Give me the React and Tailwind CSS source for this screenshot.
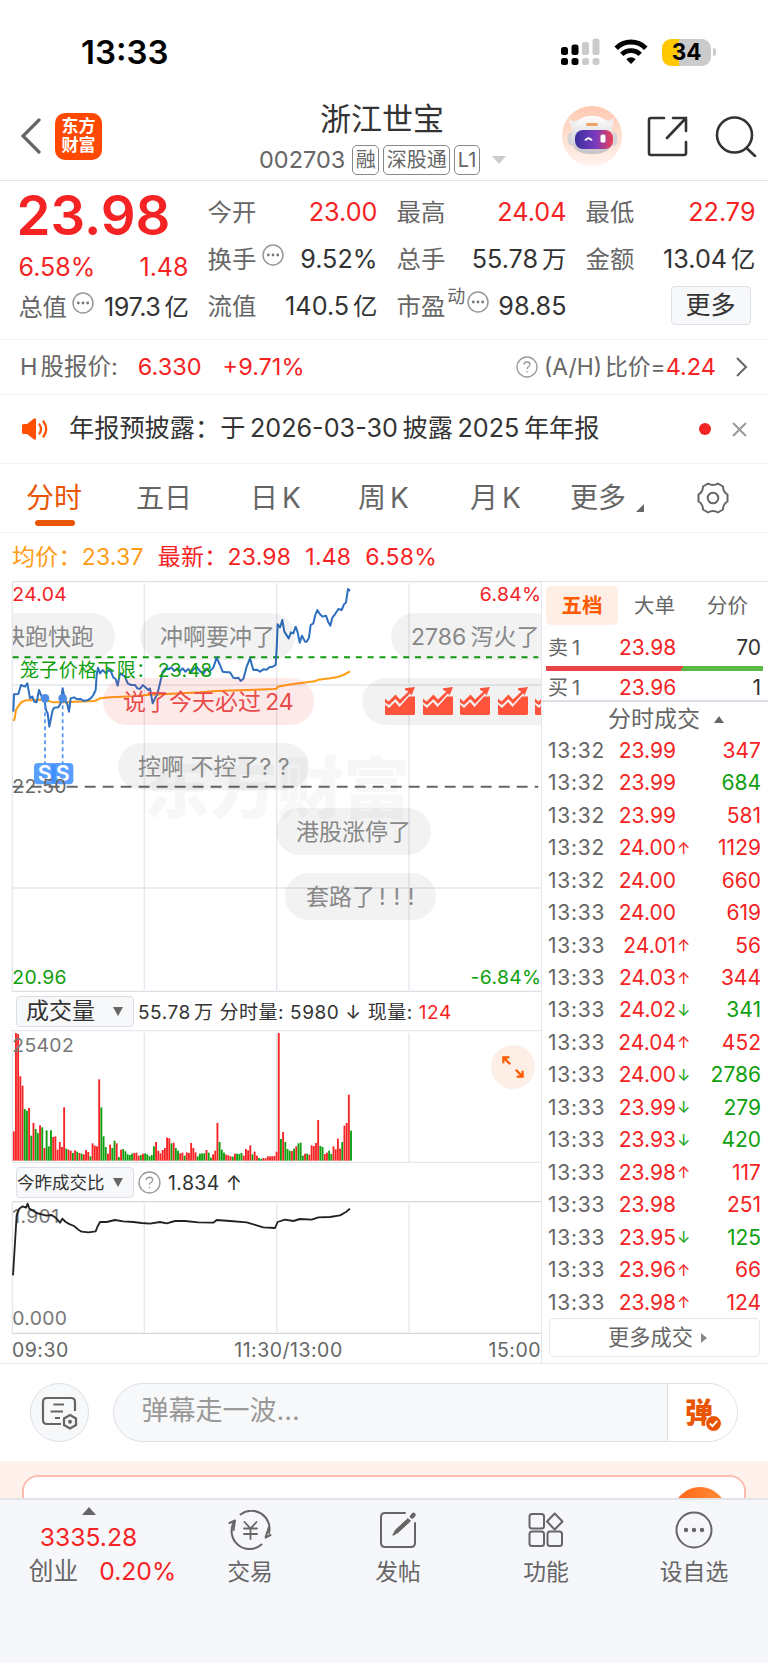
import { X } from 'lucide-react'

// Chart geometry is kept in @3x units, the svg viewBoxes scale it back down
const PRICE_LINE =
  '40,410 42,358 55,357 63,330 75,335 82,325 90,370 97,365 103,380 110,382 117,345 125,365 133,372 138,405 143,415 148,455 158,405 163,398 175,397 182,385 188,340 195,375 202,388 207,410 212,370 222,367 232,373 242,372 250,377 262,376 272,370 280,360 287,345 290,300 294,278 300,295 308,285 318,295 326,285 333,290 340,308 347,312 353,332 360,295 368,300 375,305 383,325 393,330 405,330 412,340 420,342 428,330 436,337 445,345 450,340 458,385 465,370 472,358 480,325 488,290 497,280 505,283 514,277 523,288 532,280 540,288 548,280 556,290 565,282 573,292 580,283 590,276 600,288 610,297 620,280 628,290 640,278 650,248 660,270 668,290 680,292 690,292 700,308 708,310 715,308 722,318 730,312 740,275 750,250 760,285 770,284 780,290 790,283 800,284 808,277 818,275 827,270 830,220 833,148 840,157 847,135 853,170 866,190 873,172 880,175 887,155 893,172 899,203 906,182 915,200 920,200 927,188 932,150 940,145 946,120 952,105 960,118 968,125 978,122 985,142 991,152 997,128 1005,118 1015,102 1025,105 1032,88 1038,82 1044,42 1050,48'

const AVG_LINE =
  '40,438 44,430 48,405 55,393 65,381 78,376 100,376 120,374 140,376 160,382 190,382 285,378 300,370 330,367 400,364 440,360 500,357 560,354 600,352 650,348 720,346 820,342 830,341 832,335 860,330 920,322 945,319 955,314 990,310 1010,307 1030,300 1050,289'

const RATIO_LINE =
  '39,885 46,770 50,705 58,685 68,678 78,682 83,670 88,685 97,690 110,698 125,702 140,706 155,704 168,713 180,727 187,715 197,725 210,732 222,737 235,748 245,754 265,756 287,753 292,740 300,725 320,725 345,719 370,723 400,725 425,728 450,730 480,725 500,729 525,722 555,722 595,726 640,727 650,719 690,722 740,726 770,735 790,741 825,743 833,725 855,718 880,722 900,716 935,718 955,711 990,710 1020,705 1038,695 1050,685'

// negative = falling minute
const VOLUMES = [
  88, 383, 380, 253, 225, -155, -150, 158, -75, 113, -95, -83, 106, -100, 38, -91, -43, -91, 71, 73,
  33, 56, 41, 160, -36, 33, 30, -23, 31, -27, 23, -21, 19, 32, 26, -13, 52, 45, 43, 244,
  -160, -73, -41, 21, 48, -38, -60, 52, -11, 33, -35, -28, -19, -17, -21, 23, 24, 15, -17, 21,
  -22, -19, -13, -17, -43, 56, 30, 22, 32, 38, 69, 67, -52, 54, -38, -30, 22, 24, -15, 25,
  23, 53, 38, 25, -13, -21, -22, -22, 32, -24, -9, 19, 30, 113, -56, -33, -24, 18, 16, 13,
  -12, 21, -21, -20, -23, 15, 35, 31, 46, -19, 27, 15, -8, -5, 8, 7, 13, 13, 13, 14,
  27, 383, -65, 86, -56, -35, -30, 29, -36, 43, -52, -54, -15, 21, -21, 18, 46, 44, 53, 122,
  -44, -41, 20, 24, -30, -20, 43, 34, 66, 36, -56, 105, 113, 198, -90,
]

const TRADES = [
  ['13:32', '23.99', '', '347', 'up'],
  ['13:32', '23.99', '', '684', 'down'],
  ['13:32', '23.99', '', '581', 'up'],
  ['13:32', '24.00', '↑', '1129', 'up'],
  ['13:32', '24.00', '', '660', 'up'],
  ['13:33', '24.00', '', '619', 'up'],
  ['13:33', '24.01', '↑', '56', 'up'],
  ['13:33', '24.03', '↑', '344', 'up'],
  ['13:33', '24.02', '↓', '341', 'down'],
  ['13:33', '24.04', '↑', '452', 'up'],
  ['13:33', '24.00', '↓', '2786', 'down'],
  ['13:33', '23.99', '↓', '279', 'down'],
  ['13:33', '23.93', '↓', '420', 'down'],
  ['13:33', '23.98', '↑', '117', 'up'],
  ['13:33', '23.98', '', '251', 'up'],
  ['13:33', '23.95', '↓', '125', 'down'],
  ['13:33', '23.96', '↑', '66', 'up'],
  ['13:33', '23.98', '↑', '124', 'up'],
]

function StatusBar() {
  return (
    <div className="flex h-[87px] items-center pt-[17px] pl-[81px] pr-[52px]">
      <span className="text-[33px] font-semibold leading-none text-black">13:33</span>
      <svg className="ml-auto" width="40" height="28" viewBox="0 0 40 28">
        <rect x="0" y="9" width="7" height="8" rx="2.5" />
        <rect x="10.5" y="6.5" width="7" height="10.5" rx="2.5" />
        <rect x="21" y="4" width="7" height="13" rx="2.5" fill="#cbcbcb" />
        <rect x="31.5" y="0.5" width="7" height="16.5" rx="2.5" fill="#cbcbcb" />
        <rect x="0" y="20" width="7" height="7" rx="2.5" />
        <rect x="10.5" y="20" width="7" height="7" rx="2.5" />
        <rect x="21" y="20" width="7" height="7" rx="2.5" fill="#cbcbcb" />
        <rect x="31.5" y="20" width="7" height="7" rx="2.5" fill="#cbcbcb" />
      </svg>
      <svg className="ml-[13px]" width="34" height="26" viewBox="0 0 34 26" fill="none" stroke="#000" strokeWidth="5">
        <path d="M2.2 9.2 A21 21 0 0 1 31.8 9.2" />
        <path d="M7.8 15.4 A13 13 0 0 1 26.2 15.4" strokeWidth="4.6" />
        <path d="M17 25 L12.3 20.3 A6.7 6.7 0 0 1 21.7 20.3 Z" fill="#000" stroke="none" />
      </svg>
      <div className="ml-[14px] flex items-center gap-0.5">
        <div className="flex h-[27px] w-[49px] items-center justify-center rounded-[9px] bg-[linear-gradient(90deg,#ffc800_35%,#cbcbcb_35%)] text-[22.5px] font-bold leading-none text-black">
          34
        </div>
        <div className="h-2 w-[3px] rounded-r-full bg-[#cbcbcb]" />
      </div>
    </div>
  )
}

function Robot() {
  return (
    <svg width="60" height="60" viewBox="0 0 60 60">
      <defs>
        <linearGradient id="halo" x1="0" y1="0" x2="0" y2="1">
          <stop offset="0" stopColor="#ffc9b0" />
          <stop offset="1" stopColor="#fff3ee" />
        </linearGradient>
        <linearGradient id="shell" x1="0" y1="0" x2="0" y2="1">
          <stop offset="0" stopColor="#ffffff" />
          <stop offset="1" stopColor="#c4c2c8" />
        </linearGradient>
        <linearGradient id="visor" x1="0" y1="0" x2="1" y2="0">
          <stop offset="0" stopColor="#3b2f9c" />
          <stop offset="0.55" stopColor="#7a3bc0" />
          <stop offset="1" stopColor="#ee3f52" />
        </linearGradient>
      </defs>
      <circle cx="30" cy="30" r="30" fill="url(#halo)" />
      <path d="M7 12 Q7 21 13 24 L20 13 Q10 18 7 12Z M51 11 Q53 20 47 24 L40 13 Q49 17 51 11Z" fill="#efedf0" />
      <ellipse cx="9.5" cy="33" rx="4" ry="7" fill="#d5d2d8" />
      <ellipse cx="51.5" cy="33" rx="4" ry="7" fill="#d5d2d8" />
      <path d="M30 10 C45 10 51 20 51 32 C51 44 43 48 30 48 C17 48 9 44 9 32 C9 20 15 10 30 10Z" fill="url(#shell)" />
      <rect x="24" y="17" width="12" height="3" rx="1.5" fill="#f2a468" />
      <rect x="13" y="24" width="38" height="19" rx="8" fill="url(#visor)" />
      <path d="M23 34.5 q3.5 -4.5 7 0" fill="none" stroke="#fff" strokeWidth="1.8" />
      <rect x="38.5" y="28.5" width="5" height="8" rx="1.5" fill="#fff" />
    </svg>
  )
}

function Tag({ children }) {
  return <span className="flex h-[30px] items-center rounded-[5px] border-[1.5px] border-[#888] px-[2.5px] text-[20px] leading-none">{children}</span>
}

function Header() {
  return (
    <header className="flex h-[94px] items-center border-b border-[#e4e6ea] pr-[11px] pt-[5px]">
      <div className="flex w-[259px] items-center">
        <svg className="ml-5 shrink-0" width="22" height="36" viewBox="0 0 22 36" fill="none" stroke="#666" strokeWidth="3.2" strokeLinecap="round">
          <path d="M19 2 L3 18 L19 34" />
        </svg>
        <div className="ml-[13px] flex h-[47px] w-[47px] flex-col items-center justify-center rounded-[10px] bg-[#ff4800] text-[17px] font-bold leading-[19px] text-white">
          <span>东方</span>
          <span>财富</span>
        </div>
      </div>
      <div className="flex flex-1 flex-col items-start pt-[4px]">
        <h1 className="ml-[61px] text-[31px] leading-[36px] text-[#333]">浙江世宝</h1>
        <div className="mt-[8px] flex items-center gap-[4px] text-[#666]">
          <span className="mr-[3px] text-[23.5px] leading-none">002703</span>
          <Tag>融</Tag>
          <Tag>深股通</Tag>
          <Tag>L1</Tag>
          <svg className="ml-2" width="14" height="8" viewBox="0 0 14 8">
            <path d="M0 0 H14 L7 8Z" fill="#ccc" />
          </svg>
        </div>
      </div>
      <div className="flex items-center">
        <Robot />
        <svg className="ml-[25px]" width="41" height="41" viewBox="0 0 41 41" fill="none" stroke="#333" strokeWidth="2.6" strokeLinecap="round">
          <path d="M17 2 H4 Q2 2 2 4 V37 Q2 39 4 39 H37 Q39 39 39 37 V26" />
          <path d="M26 2 H39 V15 M39 2 L20 22" />
        </svg>
        <svg className="ml-[27px]" width="42" height="42" viewBox="0 0 42 42" fill="none" stroke="#333" strokeWidth="2.6" strokeLinecap="round">
          <circle cx="19.5" cy="20" r="17.5" />
          <path d="M31.5 33 L40 41" />
        </svg>
      </div>
    </header>
  )
}

function Dots() {
  return (
    <svg className="mb-[9px] ml-1.5" width="22" height="22" viewBox="0 0 22 22">
      <circle cx="11" cy="11" r="10" fill="none" stroke="#999" strokeWidth="1.5" />
      <g fill="#777">
        <circle cx="6.3" cy="11" r="1.4" />
        <circle cx="11" cy="11" r="1.4" />
        <circle cx="15.7" cy="11" r="1.4" />
      </g>
    </svg>
  )
}

function Cell({ label, value, unit, red, dots, sup }) {
  return (
    <div className="flex h-[47px] items-center text-[24.4px] leading-none">
      <span className="text-[#666]">{label}</span>
      {sup && <span className="-mr-1 mb-5 ml-0.5 text-[18px] text-[#666]">{sup}</span>}
      {dots && <Dots />}
      <span className={red ? 'ml-auto text-[25.2px] text-[#f52323]' : 'ml-auto text-[25.2px] text-[#333]'}>{value}</span>
      {unit && <span className="ml-[4px] text-[#333]">{unit}</span>}
    </div>
  )
}

function Quote() {
  return (
    <section className="flex h-[159px] gap-[19px] border-b border-[#f0f1f3] pt-[8px] pl-[18.5px] pr-[12.5px]">
      <div className="w-[170px]">
        <div className="-ml-[2px] flex h-[53px] items-center text-[54.5px] font-semibold leading-none text-[#f52323]">23.98</div>
        <div className="mt-[6px] flex h-[38px] items-center justify-between text-[25px] leading-none text-[#f52323]">
          <span>6.58%</span>
          <span>1.48</span>
        </div>
        <div className="-mt-[2px] tracking-[-0.025em]">
          <Cell label="总值" dots value="197.3" unit="亿" />
        </div>
      </div>
      <div className="w-[170px]">
        <Cell label="今开" value="23.00" red />
        <Cell label="换手" dots value="9.52%" />
        <Cell label="流值" value="140.5" unit="亿" />
      </div>
      <div className="w-[170px]">
        <Cell label="最高" value="24.04" red />
        <Cell label="总手" value="55.78" unit="万" />
        <Cell label="市盈" sup="动" dots value="98.85" />
      </div>
      <div className="w-[170px]">
        <Cell label="最低" value="22.79" red />
        <Cell label="金额" value="13.04" unit="亿" />
        <div className="flex h-[45px] items-center justify-end pr-[5px]">
          <button className="h-[39px] w-[80px] rounded-[4px] border border-[#dcdfe6] bg-[#f7f8fa] text-[25px] leading-none text-[#333]">更多</button>
        </div>
      </div>
    </section>
  )
}

function Question({ size }) {
  return (
    <svg width={size} height={size} viewBox="0 0 22 22" fill="none" stroke="#999" strokeWidth="1.3">
      <circle cx="11" cy="11" r="10" />
      <path d="M8 8.8 Q8 6 11 6 Q14 6 14 8.6 Q14 10.3 12 11.2 Q11 11.8 11 13.2 M11 15 V16.5" />
    </svg>
  )
}

function HShare() {
  return (
    <section className="flex h-[55px] items-center border-b border-[#f0f1f3] pl-5 pr-[20px] text-[23.5px] leading-none text-[#666]">
      <span className="[word-spacing:-0.15em]">H 股报价:</span>
      <span className="ml-[20px] text-[#f52323]">6.330</span>
      <span className="ml-[21px] text-[#f52323]">+9.71%</span>
      <div className="ml-auto flex items-center">
        <Question size={22} />
        <span className="ml-1.5 text-[22.8px] [word-spacing:-0.15em]">(A/H) 比价=</span>
        <span className="text-[#f52323]">4.24</span>
        <svg className="ml-[20px]" width="12" height="20" viewBox="0 0 12 20" fill="none" stroke="#666" strokeWidth="2">
          <path d="M1 1 L10 10 L1 19" />
        </svg>
      </div>
    </section>
  )
}

function Notice() {
  return (
    <section className="flex h-[69px] items-center border-b border-[#f0f1f3] pl-[22px] pr-[19px]">
      <svg width="27" height="22" viewBox="0 0 27 22">
        <path d="M0 7.5 Q0 6 1.5 6 H5 L12 0.5 Q14 -0.5 14 2 V20 Q14 22.5 12 21.5 L5 16 H1.5 Q0 16 0 14.5Z" fill="#ff5000" />
        <path d="M17.5 6.5 Q20.5 11 17.5 15.5 M21.5 3.5 Q27 11 21.5 18.5" fill="none" stroke="#ff5000" strokeWidth="2.2" strokeLinecap="round" />
      </svg>
      <span className="ml-[20px] text-[25.2px] leading-none text-[#333] [word-spacing:-0.1em]">年报预披露：于 2026-03-30 披露 2025 年年报</span>
      <span className="ml-auto h-3 w-3 rounded-full bg-[#f52323]" />
      <X className="ml-[19px] h-[19px] w-[19px] scale-125 text-[#999]" strokeWidth={2} />
    </section>
  )
}

function Tabs() {
  return (
    <nav className="flex h-[69px] items-center border-b border-[#f0f1f3] text-[28px] leading-none text-[#666]">
      <div className="relative ml-[26px] w-[110px] text-[#ea5504]">
        分时
        <span className="absolute -bottom-[14px] left-[9px] h-1.5 w-10 rounded-full bg-[#ea5504]" />
      </div>
      <div className="w-[114px]">五日</div>
      <div className="w-[108px] [word-spacing:-0.14em]">日 K</div>
      <div className="w-[112px] [word-spacing:-0.14em]">周 K</div>
      <div className="w-[100px] [word-spacing:-0.14em]">月 K</div>
      <div className="flex items-end">
        更多
        <svg className="ml-2.5" width="8" height="8" viewBox="0 0 8 8">
          <path d="M8 0 V8 H0Z" fill="#666" />
        </svg>
      </div>
      <svg className="ml-[52px]" width="34" height="32" viewBox="0 0 32 32" fill="none" stroke="#666" strokeWidth="2">
        <path
          d="M11 1.5 Q16 4.5 21 1.5 L26 4.5 Q26 10 30.5 12.5 V19.5 Q26 22 26 27.5 L21 30.5 Q16 27.5 11 30.5 L6 27.5 Q6 22 1.5 19.5 V12.5 Q6 10 6 4.5Z"
          strokeLinejoin="round"
        />
        <circle cx="16" cy="16" r="5.3" />
      </svg>
    </nav>
  )
}

function Pill({ className, children }) {
  return (
    <div className={`absolute flex h-[47px] items-center whitespace-nowrap rounded-full pt-0.5 text-[23px] leading-none ${className}`}>{children}</div>
  )
}

function TrendUp() {
  return (
    <svg className="mr-[7.5px] shrink-0" width="30" height="28" viewBox="0 0 30 28" fill="#ff533c">
      <path d="M0 17.5 L4 21 L10 15 L14.5 20 L24 9.5 L30 9.5 V26.5 Q30 28 28.5 28 H1.5 Q0 28 0 26.5Z" />
      <path d="M0 11.5 L3.5 14.5 L10.5 7.5 L15 12.5 L23.5 4.5 L20 3 V1.3 L30 0 L26.5 8.5 L25 6.3 L15 17 L10.5 12 L4 18 L0 15.5Z" />
    </svg>
  )
}

function PriceChart() {
  return (
    <div className="relative h-[411px] overflow-hidden">
      <svg width="542" height="411" viewBox="0 18 1626 1233" fontSize="60" className="block">
        <text x="430" y="714" fontSize="200" fontWeight="900" fill="#f7f7f8">东方财富</text>
        <g stroke="#e4e7ee" strokeWidth="4">
          <path d="M37 20 V1251 M433 25 V1245 M830 25 V1245 M1227 25 V1245" />
          <path d="M37 330 H1625 M37 939 H1625" />
          <path d="M37 20 H1626 M37 1249 H1626" stroke="#dcdfe6" />
        </g>
        <path d="M38 635 H1615" stroke="#666" strokeWidth="6" strokeDasharray="33 21" />
        <path d="M38 247 H1615" stroke="#0f9f0f" strokeWidth="6" strokeDasharray="18 17.5" />
        <polyline points={AVG_LINE} fill="none" stroke="#ff9c16" strokeWidth="6" strokeLinejoin="round" />
        <polyline points={PRICE_LINE} fill="none" stroke="#2e6fbf" strokeWidth="6" strokeLinejoin="round" />
        <path d="M135 370 V565 M188 370 V565" stroke="#4c94f5" strokeWidth="5" strokeDasharray="12 9" />
        <circle cx="135" cy="370" r="13" fill="#4c8ce6" />
        <circle cx="188" cy="370" r="13" fill="#4c8ce6" />
        <rect x="102" y="564" width="65" height="64" rx="12" fill="#5aa0ff" />
        <rect x="155" y="564" width="65" height="64" rx="12" fill="#3b8cff" fillOpacity="0.85" />
        <g fill="#fff" fontWeight="600" fontSize="64" textAnchor="middle">
          <text x="134" y="619">S</text>
          <text x="188" y="619">S</text>
        </g>
        <g fontSize="58" letterSpacing="1">
          <text x="37" y="78" fill="#f52323">24.04</text>
          <text x="1624" y="78" fill="#f52323" textAnchor="end">6.84%</text>
          <text x="37" y="1228" fill="#0f9f0f">20.96</text>
          <text x="1624" y="1228" fill="#0f9f0f" textAnchor="end">-6.84%</text>
          <text x="37" y="655" fill="#666">22.50</text>
          <text x="60" y="307" fill="#0f9f0f" fontSize="57">笼子价格下限：</text>
          <text x="473" y="306" fill="#0f9f0f">23.48</text>
        </g>
      </svg>
      <div className="absolute inset-y-0 left-[13px] right-0 overflow-hidden text-[#888]">
        <Pill className="-left-[61px] top-[32px] bg-black/5 pl-[50px] pr-[21px]">快跑快跑</Pill>
        <Pill className="left-[127px] top-[32px] bg-black/5 px-5">冲啊要冲了</Pill>
        <Pill className="left-[378px] top-[32px] bg-black/5 pl-5 pr-14 [word-spacing:-0.1em]">2786 泻火了</Pill>
        <Pill className="left-[90px] top-[97px] bg-[#f52323]/10 px-5 text-[#e94b4b] [word-spacing:-0.1em]">说了今天必过 24</Pill>
        <Pill className="left-[349px] top-[97px] bg-black/5 pb-1 pl-[23px] pr-5">
          <TrendUp />
          <TrendUp />
          <TrendUp />
          <TrendUp />
          <TrendUp />
        </Pill>
        <Pill className="left-[105px] top-[162px] bg-black/5 px-5">控啊 不控了? ?</Pill>
        <Pill className="left-[263px] top-[227px] bg-black/5 px-5">港股涨停了</Pill>
        <Pill className="left-[272px] top-[292px] bg-black/5 pl-[21px] pr-[14px]">
          套路了<span className="pl-[4px] tracking-[0.34em]">!!!</span>
        </Pill>
      </div>
    </div>
  )
}

function SelectBox({ className, children }) {
  return (
    <div className={`flex h-[31px] w-[118px] items-center justify-between rounded-[4px] border border-[#dcdfe6] bg-[#f7f8fa] pr-[10px] leading-none text-[#333] ${className}`}>
      {children}
      <svg width="10" height="9" viewBox="0 0 10 9">
        <path d="M0 0 H10 L5 9Z" fill="#666" />
      </svg>
    </div>
  )
}

function VolumeChart() {
  return (
    <div className="relative">
      <svg width="542" height="133" viewBox="0 151 1626 399" className="block">
        <g stroke="#e4e7ee" strokeWidth="4">
          <path d="M37 152 V548 M433 160 V548 M830 160 V548 M1227 160 V548" />
          <path d="M37 153 H1626 M37 548 H1626" />
        </g>
        {VOLUMES.map((v, i) => (
          <rect key={i} x={38.5 + i * 6.57} y={543 - Math.abs(v)} width="5.6" height={Math.abs(v)} fill={v < 0 ? '#0f9f0f' : '#f52323'} />
        ))}
        <text x="37" y="216" fontSize="58" letterSpacing="1" fill="#777">25402</text>
      </svg>
      <div className="absolute right-[6px] top-[15px] flex h-11 w-11 items-center justify-center rounded-full bg-[#fdeee6]">
        <svg width="22" height="22" viewBox="0 0 24 24" fill="none" stroke="#ff5a00" strokeWidth="2.4">
          <path d="M1.5 8 V1.5 H8 M1.5 1.5 L9 9 M22.5 16 V22.5 H16 M22.5 22.5 L15 15" />
        </svg>
      </div>
    </div>
  )
}

function Charts() {
  return (
    <div className="w-[541px]">
      <PriceChart />
      <div className="flex h-[38px] items-center pl-4 pt-px text-[19px] leading-none tracking-[0.03em] text-[#333]">
        <SelectBox className="pl-[9px] text-[23px] tracking-normal">成交量</SelectBox>
        <span className="ml-[4px] whitespace-pre pt-0.5">
          55.78<span className="ml-[3px]">万</span> 分时量: 5980 ↓ 现量: <span className="text-[#f52323]">124</span>
        </span>
      </div>
      <VolumeChart />
      <div className="flex h-[38px] items-center pl-4 pt-px text-[19.5px] leading-none tracking-[0.02em] text-[#333]">
        <SelectBox className="text-[17.5px] tracking-normal">今昨成交比</SelectBox>
        <span className="ml-[4px] mr-[7px]">
          <Question size={23} />
        </span>
        <span className="pt-0.5">1.834 ↑</span>
      </div>
      <svg width="542" height="133" viewBox="0 662 1626 399" className="block">
        <g stroke="#e4e7ee" strokeWidth="4">
          <path d="M37 664 V1059 M433 672 V1055 M830 672 V1055 M1227 672 V1055" />
          <path d="M37 664 H1626 M37 1059 H1626" stroke="#d4d7de" />
        </g>
        <g fontSize="58" fill="#777" letterSpacing="1">
          <text x="37" y="728">1.901</text>
          <text x="37" y="1035">0.000</text>
        </g>
        <polyline points={RATIO_LINE} fill="none" stroke="#222" strokeWidth="5.5" strokeLinejoin="round" />
      </svg>
      <div className="flex h-[29px] items-center justify-between pl-[12px] pt-1 text-[19.5px] leading-none tracking-[0.025em] text-[#666]">
        <span className="w-20">09:30</span>
        <span className="ml-[24px]">11:30/13:00</span>
        <span className="w-20 text-right">15:00</span>
      </div>
    </div>
  )
}

function OrderBook() {
  return (
    <aside className="flex-1 border-l border-t border-[#e4e7ee] pl-[4px] pr-[6px] text-[21px] leading-none">
      <div className="mt-1 flex h-[39px] items-center text-[20.5px] text-[#666]">
        <span className="flex h-full w-[72px] items-center justify-center rounded-[5px] bg-[#ffeee6] pt-px font-bold text-[#ff5a00]">五档</span>
        <span className="w-[73px] pt-px text-center">大单</span>
        <span className="w-[73px] pt-px text-center">分价</span>
      </div>
      <div className="flex h-[41px] items-center pl-[2px] pr-[3px] pt-1">
        <span className="w-[72px] text-[20px] text-[#666] [word-spacing:-0.08em]">卖 1</span>
        <span className="-ml-px text-[#f52323]">23.98</span>
        <span className="ml-auto text-[#333]">70</span>
      </div>
      <div className="mr-px h-[5px] bg-[linear-gradient(120deg,#e84448_62.5%,#5cb944_62.5%)]" />
      <div className="flex h-[29px] items-center pl-[2px] pr-[3px] pt-1">
        <span className="w-[72px] text-[20px] text-[#666] [word-spacing:-0.08em]">买 1</span>
        <span className="-ml-px text-[#f52323]">23.96</span>
        <span className="ml-auto text-[#333]">1</span>
      </div>
      <div className="-ml-1 -mr-[6px] flex h-[34px] items-center justify-center gap-3.5 border-t-2 border-[#dcdfe6] pl-[20px] pt-0.5 text-[23px] text-[#666]">
        分时成交
        <svg width="10" height="7" viewBox="0 0 10 7">
          <path d="M5 0 L10 7 H0Z" fill="#666" />
        </svg>
      </div>
      {TRADES.map(([time, price, arrow, amount, dir], i) => (
        <div key={i} className="flex h-[32.47px] items-center pl-[2px] pr-[3px]">
          <span className="w-[69px] tracking-[0.035em] text-[#666]">{time}</span>
          <span className="w-[59px] text-right text-[#f52323]">{price}</span>
          <span className={arrow === '↓' ? 'ml-px text-[16px] text-[#0f9f0f]' : 'ml-px text-[16px] text-[#f52323]'}>{arrow}</span>
          <span className={dir === 'up' ? 'ml-auto text-[#f52323]' : 'ml-auto text-[#0f9f0f]'}>{amount}</span>
        </div>
      ))}
      <button className="ml-[3px] flex h-[39px] w-[211px] items-center justify-center gap-2 rounded-[5px] border border-[#e4e7ee] pl-1.5 text-[21.2px] text-[#666]">
        更多成交
        <svg width="6" height="10" viewBox="0 0 6 10">
          <path d="M0 0 L6 5 L0 10Z" fill="#888" />
        </svg>
      </button>
    </aside>
  )
}

function CommentBar() {
  return (
    <section className="flex h-[98px] items-center border-t border-[#e4e7ee] pl-[29.5px] pr-[30px]">
      <div className="flex h-[59px] w-[59px] items-center justify-center rounded-full border border-[#dcdfe6] bg-[#f7f8fa]">
        <svg className="ml-0.5" width="38" height="34" viewBox="0 0 38 34" fill="none" stroke="#666" strokeWidth="2.2">
          <path d="M20 28 H6 Q2 28 2 24 V6 Q2 2 6 2 H30 Q34 2 34 6 V15" />
          <path d="M12.5 8.5 H23 M9.5 15.5 H22 M14 22 H19" />
          <path d="M29 19 L35 22.5 V29 L29 32.5 L23 29 V22.5Z" />
          <circle cx="29" cy="25.8" r="2" fill="#666" stroke="none" />
        </svg>
      </div>
      <div className="ml-[24px] flex h-[59px] flex-1 overflow-hidden rounded-full border border-[#dcdfe6] bg-[#f7f8fa]">
        <span className="flex flex-1 items-center pb-1 pl-[28px] text-[27px] leading-none text-[#999]">弹幕走一波...</span>
        <div className="relative flex w-[70px] items-center border-l border-[#dcdfe6] bg-white pl-[17px] text-[28px] font-black leading-none text-[#ea5504]">
          弹
          <svg className="absolute left-[37px] top-[31px]" width="17" height="17" viewBox="0 0 16 16">
            <circle cx="8" cy="8" r="7.5" fill="#ea5504" stroke="#fff" />
            <path d="M4.5 8 L7 10.5 L11.5 5.5" fill="none" stroke="#fff" strokeWidth="1.8" />
          </svg>
        </div>
      </div>
    </section>
  )
}

function PromoCard() {
  return (
    <section className="h-[37px] overflow-hidden bg-[#fff2ed] px-[22px] pt-[14px]">
      <div className="h-16 rounded-[16px] border-2 border-[#ffbcb0] bg-white">
        <div className="ml-[649px] mt-[10px] h-[54px] w-[54px] rounded-full bg-[linear-gradient(90deg,#ff6412,#ff8f3d)]" />
      </div>
    </section>
  )
}

function NavItem({ label, children }) {
  return (
    <div className="flex w-[148px] flex-col items-center">
      <svg width="44" height="40" viewBox="0 0 44 40" fill="none" stroke="#666" strokeWidth="2" strokeLinecap="round" strokeLinejoin="round">
        {children}
      </svg>
      <span className="mt-[11px] text-[22.8px] leading-none">{label}</span>
    </div>
  )
}

function BottomNav() {
  return (
    <footer className="flex h-[165px] border-t-2 border-[#e2e4e8] bg-[#f6f7fa] text-[#666]">
      <div className="flex w-[177px] flex-col items-center pt-[7px] text-[24.7px] leading-none">
        <svg width="14" height="8" viewBox="0 0 14 8">
          <path d="M7 0 L14 8 H0Z" fill="#666" />
        </svg>
        <span className="mt-[10px] text-[#f52323]">3335.28</span>
        <span className="mt-[9px] flex items-center pl-7">
          创业<span className="ml-[21px] text-[#f52323]">0.20%</span>
        </span>
      </div>
      <div className="-ml-px flex pt-[10px]">
        <NavItem label="交易">
          <path d="M12.5 4.5 A18 18 0 0 1 41 23 M33.5 34.5 A18 18 0 0 1 6 12" />
          <path d="M1.5 13 L7 10.5 L5.5 20 M42.5 25 L37.5 27.5 L41 17" />
          <path d="M16.5 12 L22.5 18.5 L28.5 12 M22.5 18.5 V29 M16 18.5 H29 M16 24 H29" strokeWidth="1.8" />
        </NavItem>
        <NavItem label="发帖">
          <path d="M29 3 H9 Q5 3 5 7 V33 Q5 37 9 37 H35 Q39 37 39 33 V13" />
          <path d="M17 25 L19.5 20 L32 8.5 L34.5 11 L22 22.5Z" fill="#666" strokeWidth="1" />
          <path d="M36 6.5 L37.5 5" strokeWidth="4.5" />
        </NavItem>
        <NavItem label="功能">
          <rect x="5.5" y="4" width="14.5" height="14.5" rx="2.5" />
          <rect x="5.5" y="21.5" width="14.5" height="14.5" rx="2.5" />
          <rect x="23.5" y="21.5" width="14.5" height="14.5" rx="2.5" />
          <path d="M30.7 3.5 L38.5 11.5 L30.7 19.5 L23 11.5Z" />
        </NavItem>
        <NavItem label="设自选">
          <circle cx="22" cy="20" r="17.5" />
          <g fill="#666" strokeWidth="0">
            <circle cx="14" cy="20" r="2.2" />
            <circle cx="22" cy="20" r="2.2" />
            <circle cx="30" cy="20" r="2.2" />
          </g>
        </NavItem>
      </div>
    </footer>
  )
}

export default function App() {
  return (
    <div className="h-[1663px] w-[768px] overflow-hidden bg-white font-['Inter','Noto_Sans_CJK_SC',sans-serif]">
      <StatusBar />
      <Header />
      <Quote />
      <HShare />
      <Notice />
      <Tabs />
      <div className="flex h-[48px] items-center gap-[14px] pl-3 pt-px text-[23px] leading-none tracking-[0.01em] text-[#f52323]">
        <span className="text-[#ff9c16]">均价：23.37</span>
        <span>最新：23.98</span>
        <span>1.48</span>
        <span>6.58%</span>
      </div>
      <main className="flex h-[782px]">
        <Charts />
        <OrderBook />
      </main>
      <CommentBar />
      <PromoCard />
      <BottomNav />
    </div>
  )
}
